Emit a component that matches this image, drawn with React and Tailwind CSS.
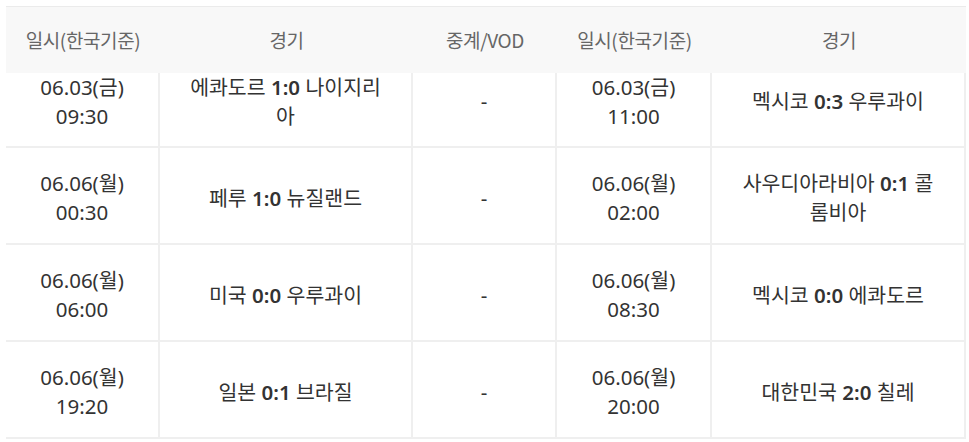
import React from 'react';

const bodyFont = { fontFamily: '"Noto Sans", "Noto Sans CJK KR", sans-serif' };
const headFont = { fontFamily: '"Noto Sans CJK KR", "Noto Sans", sans-serif' };

const cols = 'grid grid-cols-[154px_253px_144px_155px_254px]';

const rows = [
  {
    d1: '06.03(금)', t1: '09:30', home1: '에콰도르', s1: '1:0', away1: '나이지리아',
    d2: '06.03(금)', t2: '11:00', home2: '멕시코', s2: '0:3', away2: '우루과이',
  },
  {
    d1: '06.06(월)', t1: '00:30', home1: '페루', s1: '1:0', away1: '뉴질랜드',
    d2: '06.06(월)', t2: '02:00', home2: '사우디아라비아', s2: '0:1', away2: '콜롬비아',
  },
  {
    d1: '06.06(월)', t1: '06:00', home1: '미국', s1: '0:0', away1: '우루과이',
    d2: '06.06(월)', t2: '08:30', home2: '멕시코', s2: '0:0', away2: '에콰도르',
  },
  {
    d1: '06.06(월)', t1: '19:20', home1: '일본', s1: '0:1', away1: '브라질',
    d2: '06.06(월)', t2: '20:00', home2: '대한민국', s2: '2:0', away2: '칠레',
  },
];

function Match({ home, score, away }) {
  return (
    <span>
      {home} <b className="font-semibold">{score}</b> {away}
    </span>
  );
}

function Row({ r, first }) {
  const cell = first
    ? 'flex justify-center text-center px-[26px] items-start'
    : 'flex justify-center text-center px-[26px] items-center pt-[5px]';
  const single = first ? ' pt-[14px]' : '';
  return (
    <div
      className={
        cols + ' divide-x-2 divide-[#efefef] border-b-2 border-[#efefef] ' + (first ? 'h-[75px]' : 'h-[97px]')
      }
    >
      <div className={cell}>
        <div>
          {r.d1}
          <br />
          {r.t1}
        </div>
      </div>
      <div className={cell}>
        <Match home={r.home1} score={r.s1} away={r.away1} />
      </div>
      <div className={cell + single}>-</div>
      <div className={cell}>
        <div>
          {r.d2}
          <br />
          {r.t2}
        </div>
      </div>
      <div className={cell + single + ' border-r-2 border-[#efefef]'}>
        <Match home={r.home2} score={r.s2} away={r.away2} />
      </div>
    </div>
  );
}

export default function App() {
  const heads = ['일시(한국기준)', '경기', '중계/VOD', '일시(한국기준)', '경기'];
  return (
    <div className="w-[969px] h-[442px] bg-white overflow-hidden pt-[6px] pl-[6px]">
      <div className="w-[960px]">
        <div
          className={cols + ' h-[67px] bg-[#f8f8f8] border-t border-[#ebebeb] text-[#666] text-[19px] tracking-[-0.02em]'}
          style={headFont}
        >
          {heads.map((h, i) => (
            <div key={i} className="flex items-center justify-center">
              {h}
            </div>
          ))}
        </div>
        <div className="text-[#333] text-[20.5px] leading-[29px]" style={bodyFont}>
          {rows.map((r, i) => (
            <Row key={i} r={r} first={i === 0} />
          ))}
        </div>
      </div>
    </div>
  );
}
